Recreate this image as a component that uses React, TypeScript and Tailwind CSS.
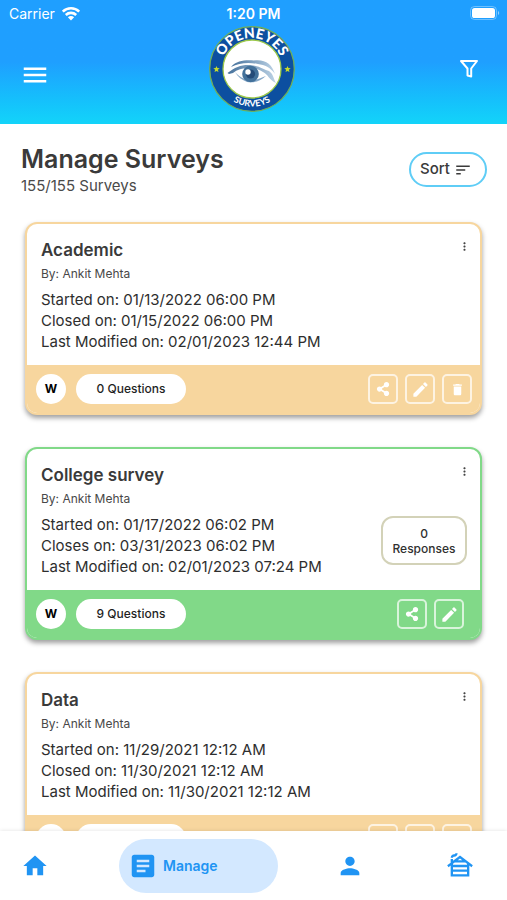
import type { ReactNode } from 'react';
import {
  MdArticle,
  MdDelete,
  MdEdit,
  MdHome,
  MdMenu,
  MdMoreVert,
  MdOutlineCabin,
  MdPerson,
  MdSort,
} from 'react-icons/md';
import { FaShareAlt } from 'react-icons/fa';

type Survey = {
  title: string;
  author: string;
  dates: string[];
  questions: number;
  active: boolean;
  responses?: number;
};

const surveys: Survey[] = [
  {
    title: 'Academic',
    author: 'Ankit Mehta',
    dates: [
      'Started on: 01/13/2022 06:00 PM',
      'Closed on: 01/15/2022 06:00 PM',
      'Last Modified on: 02/01/2023 12:44 PM',
    ],
    questions: 0,
    active: false,
  },
  {
    title: 'College survey',
    author: 'Ankit Mehta',
    dates: [
      'Started on: 01/17/2022 06:02 PM',
      'Closes on: 03/31/2023 06:02 PM',
      'Last Modified on: 02/01/2023 07:24 PM',
    ],
    questions: 9,
    active: true,
    responses: 0,
  },
  {
    title: 'Data',
    author: 'Ankit Mehta',
    dates: [
      'Started on: 11/29/2021 12:12 AM',
      'Closed on: 11/30/2021 12:12 AM',
      'Last Modified on: 11/30/2021 12:12 AM',
    ],
    questions: 0,
    active: false,
  },
];

function WifiIcon() {
  return (
    <svg viewBox="0 0 20 15" className="h-[15px] w-5" aria-hidden="true">
      <g fill="none" stroke="white" strokeWidth="2.6">
        <path d="M1.8 5.6 C6.4 1.2 13.6 1.2 18.2 5.6" />
        <path d="M4.8 9 C7.8 6.2 12.2 6.2 15.2 9" />
      </g>
      <path d="M10 14.4 L6.9 11.2 C8.7 9.6 11.3 9.6 13.1 11.2 Z" fill="white" />
    </svg>
  );
}

function BatteryIcon() {
  return (
    <svg viewBox="0 0 30 14" className="h-[14px] w-[30px]" aria-label="Battery full">
      <rect x="0.5" y="0.5" width="26" height="13" rx="4" fill="none" stroke="white" strokeOpacity="0.35" />
      <rect x="2" y="2" width="23" height="10" rx="2.6" fill="white" />
      <path d="M28 5 v4 c1.6 -0.6 1.6 -3.4 0 -4" fill="white" fillOpacity="0.5" />
    </svg>
  );
}

function Logo() {
  return (
    <svg viewBox="0 0 86 86" className="size-[86px] overflow-visible" role="img" aria-label="OpenEyes Surveys">
      <defs>
        <path id="logo-top" d="M12 43 A31 31 0 0 1 74 43" />
        <path id="logo-bottom" d="M5.500 43 A37.500 37.500 0 0 0 80.500 43" />
        <linearGradient id="eye-fade" x1="0" x2="1">
          <stop offset="0" stopColor="#44709b" />
          <stop offset="1" stopColor="#bdd3e6" />
        </linearGradient>
      </defs>
      <circle cx="43" cy="43" r="42.3" fill="#0c4fa0" stroke="#6fae5a" strokeWidth="1.3" />
      <circle cx="43" cy="43" r="29" fill="white" stroke="#9cc84a" strokeWidth="1.3" />
      <text fill="white" fontFamily="Lato, sans-serif" fontWeight="900" fontSize="14" textAnchor="middle">
        <textPath href="#logo-top" startOffset="50%">OPENEYES</textPath>
      </text>
      <text fill="white" fontFamily="Lato, sans-serif" fontWeight="700" fontSize="9" textAnchor="middle">
        <textPath href="#logo-bottom" startOffset="50%">SURVEYS</textPath>
      </text>
      <g fill="#c5d92e">
        <path d="M7.5 40 l0.9 2.1 2.3 0.2 -1.8 1.5 0.6 2.3 -2 -1.2 -2 1.2 0.6 -2.3 -1.8 -1.5 2.3 -0.2z" />
        <path d="M78.5 40 l0.9 2.1 2.3 0.2 -1.8 1.5 0.6 2.3 -2 -1.2 -2 1.2 0.6 -2.3 -1.8 -1.5 2.3 -0.2z" />
      </g>
      <path d="M22 41 C28 34 37 34 45 34.500 C56 33 63 38 66 48 C61 41 56 39 49 38 C39 36 30 37 22 41Z" fill="url(#eye-fade)" />
      <path d="M18.500 47 C26 41 33 38.500 41 39 C51 40 55 44 60 45 C65 49 64 52 67 57 C60 54 59 48 54 46 C45 40 31 41 24 47 L20 48Z" fill="url(#eye-fade)" />
      <path d="M26 46 C31 52 37 54 44 54 C49 54 53 51 57 50 C50 56 44 57 38 56 C33 54 29 51 26 46Z" fill="#86a8c8" />
      <circle cx="41.500" cy="48" r="8.300" fill="#42719b" />
      <circle cx="41.500" cy="48" r="4.600" fill="#244b78" />
      <circle cx="39" cy="46" r="2.700" fill="white" />
    </svg>
  );
}

function FunnelIcon() {
  return (
    <svg viewBox="0 0 20 20" className="size-5" aria-hidden="true">
      <path d="M2 2 H18 L12.200 9.500 V17.500 L8.500 16.500 V9.500 Z" fill="none" stroke="white" strokeWidth="2" strokeLinejoin="round" />
    </svg>
  );
}

function ActionButton({ label, children }: { label: string; children: ReactNode }) {
  return (
    <button
      type="button"
      aria-label={label}
      className="flex size-[30px] items-center justify-center rounded-[5px] border-2 border-white/70 text-white"
    >
      {children}
    </button>
  );
}

function SurveyCard({ survey }: { survey: Survey }) {
  const border = survey.active ? 'border-[#81d988]' : 'border-[#f7d69e]';
  const footer = survey.active ? 'bg-[#81d988] pr-4' : 'bg-[#f7d69e] pr-2';
  return (
    <article className={`overflow-hidden rounded-xl border-2 bg-white shadow-[0_3px_5px_rgba(0,0,0,0.38)] ${border}`}>
      <div className="flex justify-between pt-[14px] pr-[9px] pb-[13px] pl-[14px]">
        <div>
          <h2 className="text-[17px] leading-6 font-semibold text-[#3a3a3a]">{survey.title}</h2>
          <p className="text-[12px] leading-6 text-[#484848]">By: {survey.author}</p>
          <div className="mt-[3px] text-[15px] leading-[21px] text-[#2e2e2e]">
            {survey.dates.map((line) => (
              <p key={line}>{line}</p>
            ))}
          </div>
        </div>
        <div className="flex flex-col items-end">
          <button type="button" aria-label={`Options for ${survey.title}`} className="mt-[2px] text-[#444]">
            <MdMoreVert size={13} />
          </button>
          {survey.responses !== undefined && (
            <div className="mt-[38px] mr-1 flex h-[49px] w-[86px] flex-col items-center justify-center rounded-xl border-2 border-[#d3d2b8] text-[12px] leading-[15px] font-medium text-[#303030]">
              <span>{survey.responses}</span>
              <span>Responses</span>
            </div>
          )}
        </div>
      </div>
      <footer className={`flex h-12 items-center justify-between pl-[9px] ${footer}`}>
        <div className="flex items-center gap-[10px]">
          <span className="flex size-[30px] items-center justify-center rounded-full bg-white text-[12px] font-bold text-black">W</span>
          <span className="flex h-[30px] w-[110px] items-center justify-center rounded-full bg-white text-[12px] font-medium text-[#1f1f1f]">
            {survey.questions} Questions
          </span>
        </div>
        <div className="flex gap-[7px]">
          <ActionButton label="Share">
            <FaShareAlt size={14} />
          </ActionButton>
          <ActionButton label="Edit">
            <MdEdit size={19} />
          </ActionButton>
          {!survey.active && (
            <ActionButton label="Delete">
              <MdDelete size={15} />
            </ActionButton>
          )}
        </div>
      </footer>
    </article>
  );
}

export default function App() {
  return (
    <div className="flex h-screen flex-col bg-white font-[Inter,'Liberation_Sans',sans-serif]">
      <header className="h-[124px] shrink-0 bg-linear-to-b from-[#1f9fff] from-50% to-[#13d4f9] text-white">
        <div className="grid h-[26px] grid-cols-3 items-center px-[7px]">
          <div className="flex items-center gap-[6px] pl-[2px]">
            <span className="text-[14px]">Carrier</span>
            <WifiIcon />
          </div>
          <span className="text-center text-[14px] font-semibold">1:20 PM</span>
          <div className="flex justify-end">
            <BatteryIcon />
          </div>
        </div>
        <div className="grid grid-cols-3 items-center pr-7 pl-5">
          <button type="button" aria-label="Menu" className="mt-3 justify-self-start">
            <MdMenu size={30} />
          </button>
          <div className="ml-1 justify-self-center">
            <Logo />
          </div>
          <button type="button" aria-label="Filter" className="justify-self-end">
            <FunnelIcon />
          </button>
        </div>
      </header>

      <main className="min-h-0 flex-1 overflow-hidden">
        <div className="flex items-start justify-between pt-5 pr-5 pl-[21px]">
          <div>
            <h1 className="text-[25px] leading-[30px] font-semibold text-[#3a3a3a]">Manage Surveys</h1>
            <p className="text-[15px] leading-6 text-[#4a4a4a]">155/155 Surveys</p>
          </div>
          <button
            type="button"
            className="mt-2 flex h-[35px] w-[78px] items-center justify-center gap-1 rounded-full border-2 border-[#5fcdf6] pr-1 text-[15px] font-medium text-[#3a3a3a]"
          >
            Sort
            <MdSort size={18} />
          </button>
        </div>
        <div className="mt-6 flex flex-col gap-8 px-[25px]">
          {surveys.map((survey) => (
            <SurveyCard key={survey.title} survey={survey} />
          ))}
        </div>
      </main>

      <nav className="z-10 flex h-[69px] shrink-0 items-center justify-between bg-white pr-[33px] pl-[21px] text-[#2094f3] shadow-[0_0_4px_rgba(0,0,0,0.12)]">
        <button type="button" aria-label="Home" className="mr-3">
          <MdHome size={28} />
        </button>
        <button
          type="button"
          aria-current="page"
          className="flex h-[54px] w-[159px] items-center gap-[5px] rounded-full bg-[#d3e8ff] pl-[9px] text-[14px] font-semibold"
        >
          <MdArticle size={30} />
          Manage
        </button>
        <button type="button" aria-label="Profile" className="mr-6">
          <MdPerson size={28} />
        </button>
        <button type="button" aria-label="Cabin">
          <MdOutlineCabin size={28} />
        </button>
      </nav>
    </div>
  );
}
